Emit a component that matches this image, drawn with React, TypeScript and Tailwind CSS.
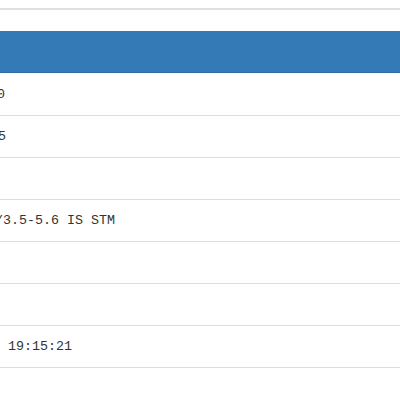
const rows = [
  { text: "100", offset: "-ml-[19px]" },
  { text: "55", offset: "-ml-[10px]" },
  { text: "", offset: "" },
  { text: "EF-S18-55mm f/3.5-5.6 IS STM", offset: "-ml-[109px]" },
  { text: "", offset: "" },
  { text: "", offset: "" },
  { text: "2015:08:12 19:15:21", offset: "-ml-[80px]" },
];

export default function App() {
  return (
    <div className="w-[400px] h-[400px] overflow-hidden bg-white font-['Liberation_Mono',monospace] text-[13.33px] text-[#333]">
      {/* top rule */}
      <div className="mt-[8px] h-[2px] bg-[#e0e0e0]" />
      <div className="h-[21px]" />

      {/* header bar */}
      <div className="h-[42px] bg-[#337ab7] border-b border-[#2e6da4]" />
      <div className="h-px bg-[#f2fbfd]" />

      {/* table rows */}
      {rows.map((row, i) => (
        <div
          key={i}
          className="h-[42px] flex items-center border-b border-[#dddddd] overflow-hidden whitespace-nowrap"
        >
          {row.text && <span className={`shrink-0 ${row.offset}`}>{row.text}</span>}
        </div>
      ))}
    </div>
  );
}
